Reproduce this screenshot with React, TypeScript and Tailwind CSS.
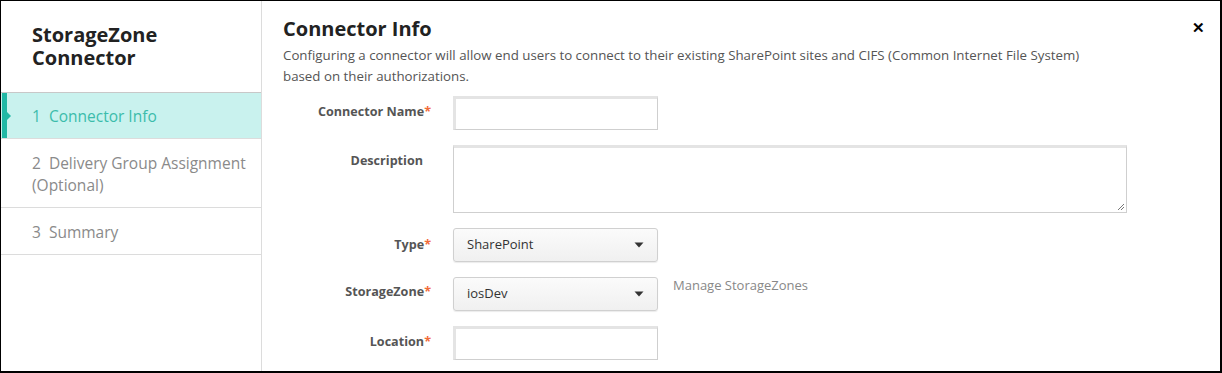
import React from "react";

const font = { fontFamily: '"Open Sans", "Noto Sans", sans-serif' };

function Label({ text, req }: { text: string; req?: boolean }) {
  return (
    <div className={`w-[148px] shrink-0 text-right text-[12.6px] font-bold text-[#555] ${req ? "" : "pr-[8px]"}`}>
      {text}
      {req && <span className="text-[#f26b3a]">*</span>}
    </div>
  );
}

function Select({ value }: { value: string }) {
  return (
    <div className="w-[205px] h-[34px] rounded-[3px] border border-[#d0d0d0] bg-gradient-to-b from-[#fbfbfb] to-[#f0f0f0] shadow-[0_1px_1px_rgba(0,0,0,0.08)] flex items-center justify-between pl-[13px] pr-[13px] text-[13px] text-[#333]">
      <span>{value}</span>
      <svg width="10" height="6" viewBox="0 0 10 6">
        <path d="M0.5 0.5 L9.5 0.5 L5 5.5 Z" fill="#333" />
      </svg>
    </div>
  );
}

export default function App() {
  return (
    <div
      style={font}
      className="w-[1222px] h-[373px] bg-white border-l border-t border-black border-r-2 border-b-2 flex overflow-hidden"
    >
      <aside className="w-[261px] shrink-0 border-r border-[#dcdcdc] flex flex-col">
        <div className="pl-[31px] pt-[22px] h-[91px] text-[20px] font-bold text-[#222]">
          <div className="leading-[23px]">StorageZone</div>
          <div className="leading-[23px]">Connector</div>
        </div>
        <div className="border-t border-[#c8c8c8]">
          <div className="relative h-[46px] bg-[#c9f2ee] flex items-center pl-[31px] pt-[2px] text-[15.5px] text-[#3bbcab] border-b border-[#dcdcdc]">
            <div className="absolute left-[1px] top-0 bottom-0 w-[5px] bg-[#21b8a5]" />
            <div className="absolute left-[6px] top-[19px] w-0 h-0 border-t-[4px] border-b-[4px] border-l-[4px] border-t-transparent border-b-transparent border-l-[#21b8a5]" />
            <span>1&nbsp;&nbsp;Connector Info</span>
          </div>
          <div className="h-[69px] pl-[31px] pt-[13px] text-[15.5px] leading-[22px] text-[#8a8a8a] border-b border-[#dcdcdc]">
            2&nbsp;&nbsp;Delivery Group Assignment
            <br />
            (Optional)
          </div>
          <div className="h-[47px] pl-[31px] pt-[3px] flex items-center text-[15.5px] text-[#8a8a8a] border-b border-[#dcdcdc]">
            3&nbsp;&nbsp;Summary
          </div>
        </div>
      </aside>

      <main className="relative flex-1 pl-[21px] pt-[14px]">
        <div className="absolute right-[15px] top-[19px] text-[15px] font-bold text-black leading-none">✕</div>
        <h1 className="text-[20px] leading-[28px] font-bold text-[#222]">Connector Info</h1>
        <p className="mt-[2px] w-[805px] text-[13.3px] leading-[21px] text-[#555]">
          Configuring a connector will allow end users to connect to their existing SharePoint sites and CIFS (Common Internet File System) based on their authorizations.
        </p>

        <div className="mt-[9px] flex flex-col">
          <div className="flex items-center gap-[22px]">
            <div className="-mt-[2px]">
              <Label text="Connector Name" req />
            </div>
            <div className="w-[205px] h-[34px] border border-[#cfcfcf] border-t-[3px] border-l-[3px] border-t-[#e4e4e4] border-l-[#e4e4e4] bg-white" />
          </div>

          <div className="mt-[15px] flex items-start gap-[22px]">
            <div className="pt-[7px]">
              <Label text="Description" />
            </div>
            <div className="relative w-[674px] h-[68px] border border-[#cfcfcf] border-t-[3px] border-t-[#e4e4e4] bg-white">
              <svg className="absolute right-[1px] bottom-[1px]" width="8" height="8" viewBox="0 0 8 8">
                <path d="M7 1 L1 7 M7 4 L4 7" stroke="#777" strokeWidth="1" />
              </svg>
            </div>
          </div>

          <div className="mt-[15px] flex items-center gap-[22px]">
            <Label text="Type" req />
            <Select value="SharePoint" />
          </div>

          <div className="mt-[15px] flex items-start gap-[22px]">
            <div className="pt-[6px]">
              <Label text="StorageZone" req />
            </div>
            <Select value="iosDev" />
            <div className="-ml-[7px] -mt-[1px] text-[13px] text-[#888]">Manage StorageZones</div>
          </div>

          <div className="mt-[15px] flex items-center gap-[22px]">
            <div className="-mt-[2px]">
              <Label text="Location" req />
            </div>
            <div className="w-[205px] h-[34px] border border-[#cfcfcf] border-t-[3px] border-l-[3px] border-t-[#e4e4e4] border-l-[#e4e4e4] bg-white" />
          </div>
        </div>
      </main>
    </div>
  );
}
